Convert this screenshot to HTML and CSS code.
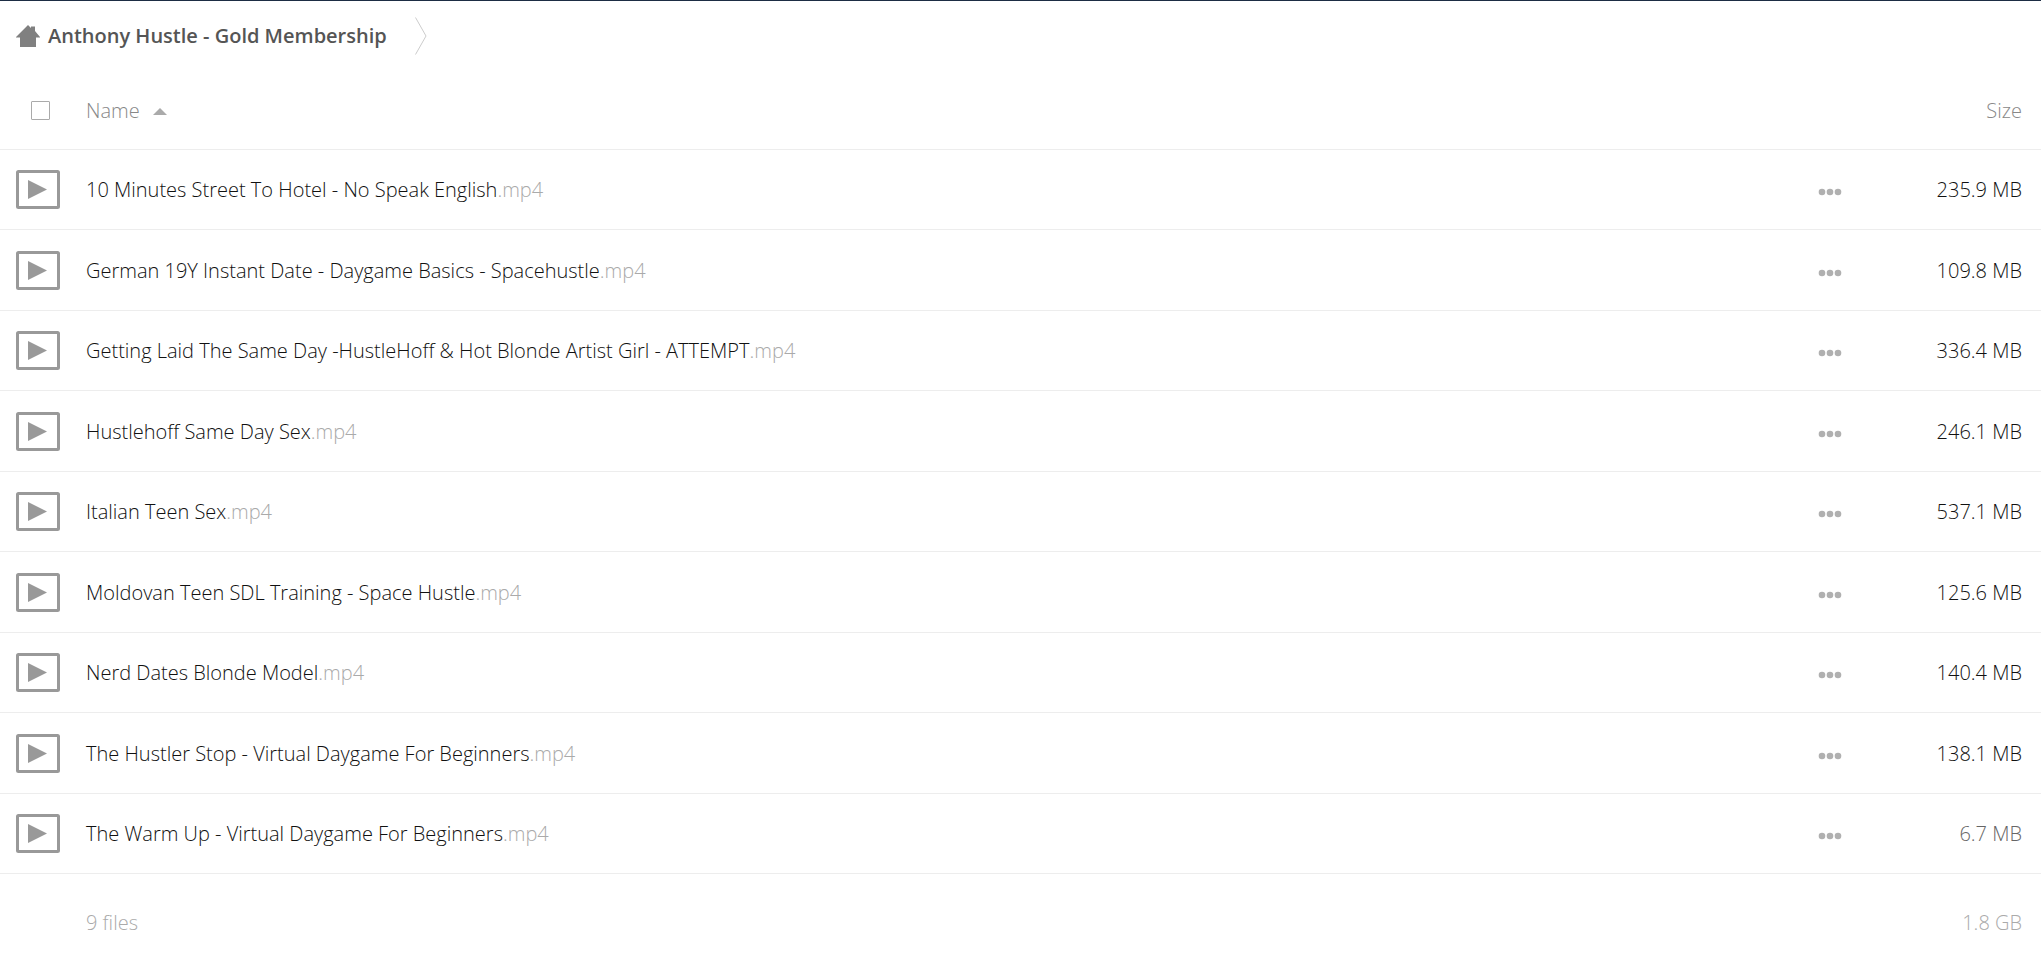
FILE: index.html
```
<!DOCTYPE html>
<html lang="en">
<head>
    <meta charset="UTF-8">
    <meta name="viewport" content="width=device-width, initial-scale=1.0">
    <title>Anthony Hustle - Gold Membership</title>
    <link rel="stylesheet" href="styles.css">
</head>
<body>
    <svg class="sprite" aria-hidden="true">
        <symbol id="icon-video" viewBox="0 0 44 40">
            <rect x="1.5" y="1.5" width="41" height="36" rx="1" fill="none" stroke="#999" stroke-width="3"/>
            <path d="M12 10v19l19-9.500z" fill="#999"/>
        </symbol>
        <symbol id="icon-more" viewBox="0 0 24 8">
            <circle cx="4" cy="4" r="3.3"/>
            <circle cx="12" cy="4" r="3.3"/>
            <circle cx="20" cy="4" r="3.3"/>
        </symbol>
    </svg>

    <nav class="breadcrumb">
        <a href="#" class="crumb">
            <svg class="home-icon" viewBox="0 0 24 22"><path d="M12 0l3 3V1.500h4V6l5 6v.5h-4V22H4v-9.500H0V12z"/></svg>
            <span>Anthony Hustle - Gold Membership</span>
        </a>
        <svg class="crumb-arrow" viewBox="0 0 12 38"><path d="M.5.5l10.500 18.500L.5 37.500"/></svg>
    </nav>

    <table class="files">
        <thead>
            <tr>
                <th class="icon-col"><input type="checkbox" class="select-all" aria-label="Select all"></th>
                <th class="name"><button type="button" class="sort">Name <span class="sort-arrow"></span></button></th>
                <th class="action"></th>
                <th class="size"><button type="button" class="sort">Size</button></th>
            </tr>
        </thead>
        <tbody id="fileList"></tbody>
        <tfoot>
            <tr>
                <td></td>
                <td class="name">9 files</td>
                <td></td>
                <td class="size">1.8 GB</td>
            </tr>
        </tfoot>
    </table>

    <script src="script.js"></script>
</body>
</html>
```
FILE: styles.css
```
body {
    font-family: "Open Sans", sans-serif;
    font-size: 20px;
    font-weight: 300;
    line-height: 28px;
    color: #111;
    background-color: #fff;
    margin: 0;
    border-top: 1px solid #1d2d44;
}
.sprite {
    position: absolute;
    width: 0;
    height: 0;
}
.breadcrumb {
    display: flex;
    align-items: center;
    gap: 28px;
    height: 70px;
    padding-left: 16px;
}
.crumb {
    display: flex;
    align-items: center;
    gap: 8px;
    color: #555;
    font-weight: 600;
    text-decoration: none;
}
.home-icon {
    width: 24px;
    height: 22px;
    fill: #808080;
}
.crumb-arrow {
    width: 12px;
    height: 38px;
    fill: none;
    stroke: #ccc;
}
.files {
    width: 100%;
    table-layout: fixed;
    border-collapse: collapse;
}
th, td {
    box-sizing: border-box;
    height: 80px;
    padding: 0;
    text-align: left;
    vertical-align: middle;
    font-weight: 300;
    border-bottom: 1px solid #ededed;
}
thead th {
    height: 78px;
    padding-top: 2px;
}
tbody td {
    padding-top: 2px;
}
tbody tr:nth-child(even) td {
    height: 81px;
}
.icon-col {
    width: 86px;
    padding-left: 16px;
}
th.icon-col {
    padding-left: 31px;
}
.action {
    width: 64px;
}
.files .size {
    width: 159px;
    padding-right: 19px;
    text-align: right;
}
.select-all {
    appearance: none;
    display: block;
    width: 19px;
    height: 19px;
    margin: 0;
    border: 1px solid #aaa;
    border-radius: 1px;
}
.select-all:checked {
    background-color: #999;
}
.sort {
    padding: 0;
    border: none;
    background: none;
    font: inherit;
    color: #888;
    cursor: pointer;
}
.sort-arrow {
    display: inline-block;
    margin-left: 8px;
    border: 7px solid transparent;
    border-top: none;
    border-bottom-color: #aaa;
    vertical-align: 3px;
}
.video-icon {
    display: block;
    width: 44px;
    height: 40px;
}
.ext {
    color: #aaa;
}
.more {
    display: block;
    padding: 8px 0;
    margin-top: 4px;
    border: none;
    background: none;
    cursor: pointer;
}
.more svg {
    display: block;
    width: 24px;
    height: 8px;
    fill: #b0b0b0;
}
.small {
    color: #666;
}
tfoot td {
    height: 99px;
    color: #aaa;
    border-bottom: none;
}
```
FILE: script.js
```
const files = [
    ["10 Minutes Street To Hotel - No Speak English", "235.9 MB"],
    ["German 19Y Instant Date - Daygame Basics - Spacehustle", "109.8 MB"],
    ["Getting Laid The Same Day -HustleHoff & Hot Blonde Artist Girl - ATTEMPT", "336.4 MB"],
    ["Hustlehoff Same Day Sex", "246.1 MB"],
    ["Italian Teen Sex", "537.1 MB"],
    ["Moldovan Teen SDL Training - Space Hustle", "125.6 MB"],
    ["Nerd Dates Blonde Model", "140.4 MB"],
    ["The Hustler Stop - Virtual Daygame For Beginners", "138.1 MB"],
    ["The Warm Up - Virtual Daygame For Beginners", "6.7 MB"]
];

document.getElementById("fileList").innerHTML = files.map(function([name, size]) {
    // files under 10 MB get a lighter size label
    const small = parseFloat(size) < 10 ? " small" : "";
    return `<tr>
        <td class="icon-col"><svg class="video-icon"><use href="#icon-video"/></svg></td>
        <td class="name">${name.replace("&", "&amp;")}<span class="ext">.mp4</span></td>
        <td class="action"><button type="button" class="more" aria-label="More actions"><svg><use href="#icon-more"/></svg></button></td>
        <td class="size${small}">${size}</td>
    </tr>`;
}).join("");
```
